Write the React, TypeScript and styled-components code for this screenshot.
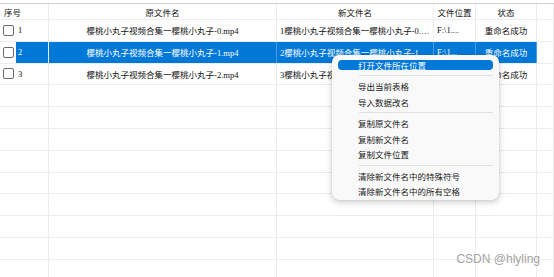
import styled, { createGlobalStyle } from "styled-components";

const GlobalStyle = createGlobalStyle`
  html, body {
    margin: 0;
    padding: 0;
    background: #fff;
  }
  body {
    width: 554px;
    height: 277px;
    overflow: hidden;
  }
`;

const COLS = "49px 228px 157px 42px 61px 1fr";
const BLUE = "#0078d7";
const SANS = `"Noto Sans CJK SC", sans-serif`;

const Page = styled.div`
  position: relative;
  width: 554px;
  height: 277px;
  overflow: hidden;
  padding-top: 3px;
  box-sizing: border-box;
  font-family: "Liberation Serif", "Noto Sans CJK SC", serif;
  font-size: 8.5px;
  color: #111;
`;

const Table = styled.div`
  display: flex;
  flex-direction: column;
  border-top: 1px solid #cfcfcf;
`;

const Row = styled.div<{ $header?: boolean }>`
  display: grid;
  grid-template-columns: ${COLS};
  height: ${(p) => (p.$header ? "16px" : "21.8px")};
  border-bottom: 1px solid #ececec;
  box-sizing: border-box;
  font-family: ${(p) => (p.$header ? SANS : "inherit")};
`;

const Cell = styled.div<{
  $align?: "left" | "center";
  $sel?: boolean;
  $sans?: boolean;
}>`
  display: flex;
  align-items: center;
  justify-content: ${(p) => (p.$align === "left" ? "flex-start" : "center")};
  padding: 0 3px;
  border-right: 1px solid ${(p) => (p.$sel ? "#4d9be0" : "#ececec")};
  background: ${(p) => (p.$sel ? BLUE : "transparent")};
  color: ${(p) => (p.$sel ? "#fff" : "inherit")};
  font-family: ${(p) => (p.$sans ? SANS : "inherit")};
  white-space: nowrap;
  overflow: hidden;
  min-width: 0;
`;

const Clip = styled.span`
  overflow: hidden;
  text-overflow: ellipsis;
  white-space: nowrap;
`;

const IndexCell = styled.div`
  display: flex;
  align-items: center;
  padding-left: 3px;
  border-right: 1px solid #ececec;
`;

const IndexHead = styled(IndexCell)`
  padding-left: 4px;
`;

const Check = styled.span`
  width: 9px;
  height: 9px;
  border: 1px solid #6b6b6b;
  border-radius: 2px;
  background: #fff;
  flex: none;
`;

const Num = styled.span<{ $sel?: boolean }>`
  flex: 1;
  align-self: stretch;
  display: flex;
  align-items: center;
  margin-left: 2px;
  padding-left: 2px;
  background: ${(p) => (p.$sel ? BLUE : "transparent")};
  color: ${(p) => (p.$sel ? "#fff" : "inherit")};
`;

const Menu = styled.div`
  position: absolute;
  left: 332px;
  top: 55px;
  width: 167px;
  padding: 2px 0 1px;
  background: #f9f9f9;
  border-radius: 7px;
  box-shadow: 0 2px 6px rgba(0, 0, 0, 0.22), 0 0 1px rgba(0, 0, 0, 0.2);
  font-family: ${SANS};
  font-size: 8.5px;
  color: #1a1a1a;
`;

const Item = styled.div<{ $active?: boolean }>`
  position: relative;
  height: 15.5px;
  display: flex;
  align-items: center;
  padding-left: 26px;
  color: ${(p) => (p.$active ? "#fff" : "inherit")};

  &::before {
    content: "";
    display: ${(p) => (p.$active ? "block" : "none")};
    position: absolute;
    left: 6px;
    right: 6px;
    top: 3px;
    bottom: 3px;
    border-radius: 4px;
    background: ${BLUE};
  }

  span {
    position: relative;
  }
`;

const Sep = styled.div`
  height: 6px;
  display: flex;
  align-items: center;
  padding: 0 6px 0 27px;

  &::after {
    content: "";
    flex: 1;
    height: 1px;
    background: #e0e0e0;
  }
`;

const Watermark = styled.div`
  position: absolute;
  right: 14px;
  bottom: 11px;
  font-family: "Liberation Sans", sans-serif;
  font-size: 12px;
  color: #a3a3a3;
`;

const rows = [
  {
    n: "1",
    src: "樱桃小丸子视频合集一樱桃小丸子-0.mp4",
    dst: "1樱桃小丸子视频合集一樱桃小丸子-0.mp4",
    loc: "F:\\1....",
  },
  {
    n: "2",
    src: "樱桃小丸子视频合集一樱桃小丸子-1.mp4",
    dst: "2樱桃小丸子视频合集一樱桃小丸子-1.mp4",
    loc: "F:\\1...",
  },
  {
    n: "3",
    src: "樱桃小丸子视频合集一樱桃小丸子-2.mp4",
    dst: "3樱桃小丸子视频合集一樱桃小丸子-2.mp4",
    loc: "F:\\1....",
  },
];

const menu: (string | null)[] = [
  "打开文件所在位置",
  null,
  "导出当前表格",
  "导入数据改名",
  null,
  "复制原文件名",
  "复制新文件名",
  "复制文件位置",
  null,
  "清除新文件名中的特殊符号",
  "清除新文件名中的所有空格",
];

export default function App() {
  return (
    <>
      <GlobalStyle />
      <Page>
        <Table>
          <Row $header>
            <IndexHead>序号</IndexHead>
            <Cell>原文件名</Cell>
            <Cell>新文件名</Cell>
            <Cell>文件位置</Cell>
            <Cell>状态</Cell>
            <Cell />
          </Row>
          {rows.map((r) => {
            const sel = r.n === "2";
            return (
              <Row key={r.n}>
                <IndexCell>
                  <Check />
                  <Num $sel={sel}>{r.n}</Num>
                </IndexCell>
                <Cell $sel={sel}>{r.src}</Cell>
                <Cell $sel={sel} $align="left">
                  <Clip>{r.dst}</Clip>
                </Cell>
                <Cell $sel={sel} $align="left">
                  <Clip>{r.loc}</Clip>
                </Cell>
                <Cell $sel={sel} $sans>
                  重命名成功
                </Cell>
                <Cell />
              </Row>
            );
          })}
          {Array.from({ length: 9 }).map((_, i) => (
            <Row key={"e" + i}>
              <IndexCell />
              <Cell />
              <Cell />
              <Cell />
              <Cell />
              <Cell />
            </Row>
          ))}
        </Table>

        <Menu>
          {menu.map((m, i) =>
            m === null ? (
              <Sep key={i} />
            ) : (
              <Item key={i} $active={i === 0}>
                <span>{m}</span>
              </Item>
            )
          )}
        </Menu>

        <Watermark>CSDN @hlyling</Watermark>
      </Page>
    </>
  );
}
